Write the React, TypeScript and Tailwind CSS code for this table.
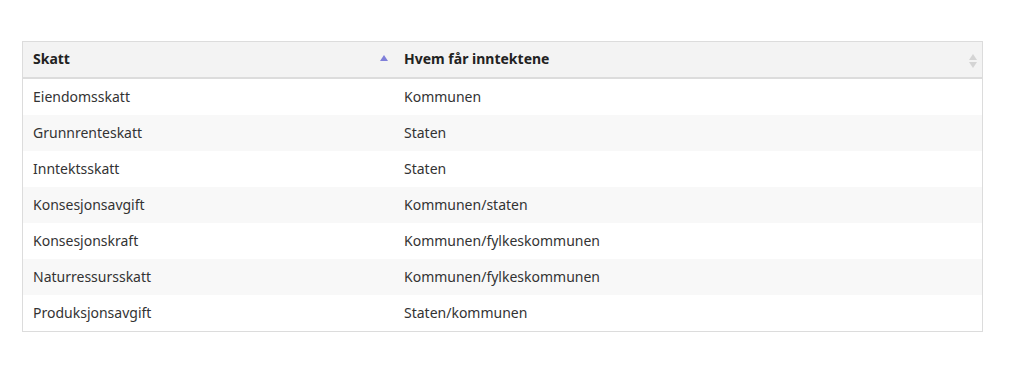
const rows: [string, string][] = [
  ["Eiendomsskatt", "Kommunen"],
  ["Grunnrenteskatt", "Staten"],
  ["Inntektsskatt", "Staten"],
  ["Konsesjonsavgift", "Kommunen/staten"],
  ["Konsesjonskraft", "Kommunen/fylkeskommunen"],
  ["Naturressursskatt", "Kommunen/fylkeskommunen"],
  ["Produksjonsavgift", "Staten/kommunen"],
];

function SortUp() {
  return (
    <svg width="8" height="7" viewBox="0 0 8 7">
      <path d="M4 0 L8 6 L0 6 Z" fill="#7f7fd9" />
    </svg>
  );
}

function SortBoth() {
  return (
    <svg width="8" height="16" viewBox="0 0 8 16">
      <path d="M4 1 L8 7 L0 7 Z" fill="#d4d4d4" />
      <path d="M4 15 L8 9 L0 9 Z" fill="#d4d4d4" />
    </svg>
  );
}

export default function App() {
  return (
    <div className="min-h-screen bg-white pt-[41px] pl-[22px] font-['Noto_Sans',sans-serif] text-[14px] leading-[20px] text-[#333]">
      <div className="w-[961px] border border-[#dcdcdc]">
        {/* header */}
        <div className="grid grid-cols-[370px_1fr] h-[37px] pb-[2px] bg-[#f3f3f3] border-b-2 border-[#dcdcdc] font-bold text-[#222]">
          <div className="flex items-center justify-between pl-[10px] pr-[5px]">
            <span>Skatt</span>
            <span className="-mt-[1px]"><SortUp /></span>
          </div>
          <div className="flex items-center justify-between pl-[11px] pr-[5px]">
            <span>Hvem får inntektene</span>
            <span className="mt-[4px]"><SortBoth /></span>
          </div>
        </div>
        {rows.map(([a, b], i) => (
          <div
            key={a}
            className={`grid grid-cols-[370px_1fr] h-[36px] pb-[1px] items-center ${i % 2 === 1 ? "bg-[#f8f8f8]" : "bg-white"}`}
          >
            <div className="pl-[10px]">{a}</div>
            <div className="pl-[11px]">{b}</div>
          </div>
        ))}
      </div>
    </div>
  );
}
